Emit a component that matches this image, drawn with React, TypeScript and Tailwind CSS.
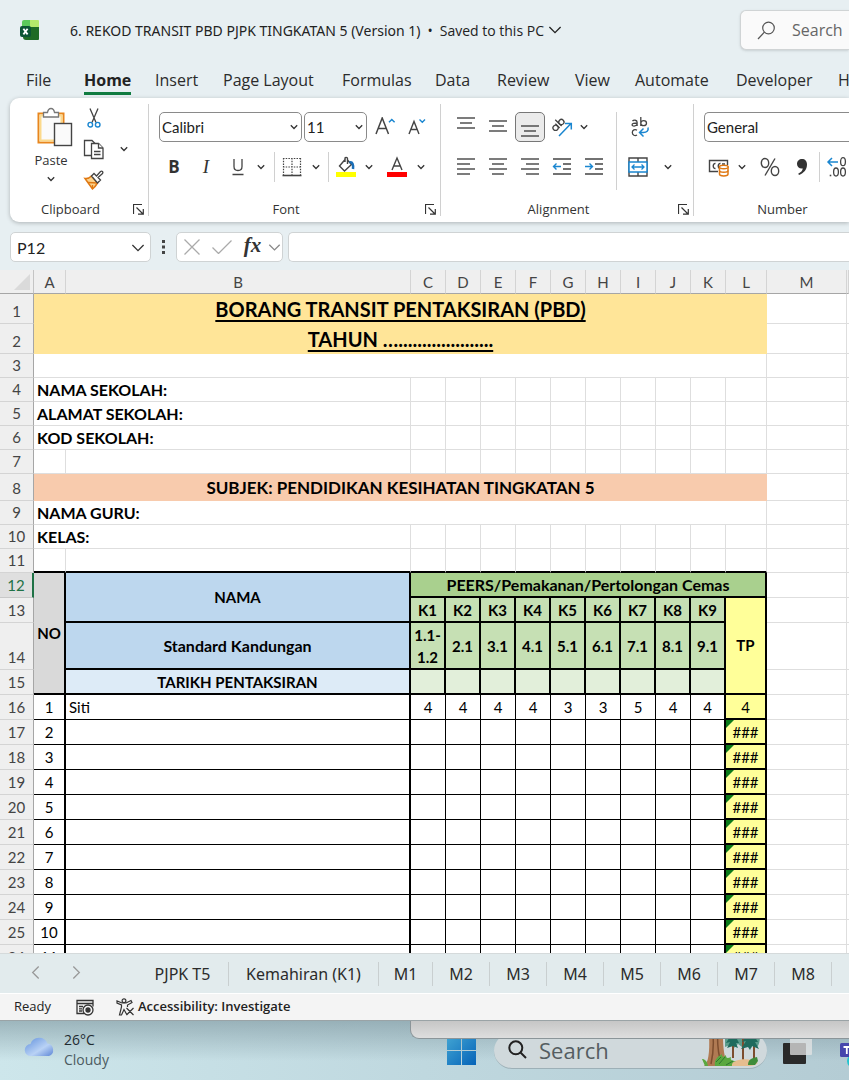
import React from "react";

const CELL_FONT = "font-['Lato','Liberation_Sans',sans-serif]";

function Chevron({ size = 8, className = "" }: { size?: number; className?: string }) {
  return (
    <svg width={size} height={size} viewBox="0 0 8 8" fill="none" stroke="currentColor" strokeWidth="1.3" className={className} aria-hidden="true">
      <path d="M0.8 2.3 4 5.5 7.2 2.3" vectorEffect="non-scaling-stroke" />
    </svg>
  );
}

type IconButtonProps = { label: string; className?: string; children: React.ReactNode };

function IconButton({ label, className = "w-8", children }: IconButtonProps) {
  return (
    <button type="button" aria-label={label} className={`flex h-[30px] shrink-0 items-center justify-center text-[#333] ${className}`}>
      {children}
    </button>
  );
}

function Group({ title, launcher = true, className, children }: { title: string; launcher?: boolean; className: string; children: React.ReactNode }) {
  return (
    <section className={`flex flex-col ${className}`} aria-label={title}>
      <div className="h-[96px]">{children}</div>
      <div className="flex h-7 items-center pt-[2px]">
        <span className={launcher ? "flex-1 pr-[2px] text-center text-[13px] leading-4 text-[#333]" : "flex-1 pl-[22px] text-center text-[13px] leading-4 text-[#333]"}>{title}</span>
        {launcher && (
          <button type="button" aria-label={`${title} settings`} className="mr-1 text-[#333]">
            <svg width="11" height="11" viewBox="0 0 11 11" fill="none" stroke="currentColor">
              <path d="M0.5 10V0.5H9M3.5 3.5 9.5 9.5M5 10.2h5.3V5" strokeWidth="1.2" />
            </svg>
          </button>
        )}
      </div>
    </section>
  );
}

function AlignLines({ rows }: { rows: [number, number, number][] }) {
  return (
    <svg width="20" height="20" viewBox="0 0 20 20" stroke="#444" strokeWidth="1.4" aria-hidden="true">
      {rows.map(([y, a, b]) => (
        <path key={y} d={`M${a} ${y}H${b}`} />
      ))}
    </svg>
  );
}

const TABS: [string, string][] = [
  ["File", "w-[58px]"],
  ["Home", "w-[71px]"],
  ["Insert", "w-[68px]"],
  ["Page Layout", "w-[119px]"],
  ["Formulas", "w-[93px]"],
  ["Data", "w-[62px]"],
  ["Review", "w-[78px]"],
  ["View", "w-[60px]"],
  ["Automate", "w-[101px]"],
  ["Developer", "w-[102px]"],
  ["Help", "w-[60px]"],
];

function TitleBar() {
  return (
    <header className="flex h-[60px] shrink-0 items-center">
      <div className="flex w-[740px] shrink-0 items-center pl-5">
        <svg width="20" height="20" viewBox="0 0 20 20" aria-label="Excel">
          <path d="M4 0h8v8H2V2a2 2 0 0 1 2-2z" fill="#5cc95c" />
          <path d="M10 0h8a1 1 0 0 1 1 1v6h-9z" fill="#b5e96b" />
          <path d="M3 7h16v12a1 1 0 0 1-1 1H6a3 3 0 0 1-3-3z" fill="#1e6b25" />
          <rect x="0" y="6" width="11" height="11" rx="2" fill="#0c5535" />
          <path d="M3.4 8.8 7.6 14.4M7.6 8.8 3.4 14.4" stroke="#fff" strokeWidth="1.8" />
        </svg>
        <span className="ml-[30px] whitespace-nowrap font-['Noto_Sans',sans-serif] text-[14px] text-[#222]">
          6. REKOD TRANSIT PBD PJPK TINGKATAN 5 (Version 1)
        </span>
        <span className="mx-[7px] text-[14px] text-[#222]">•</span>
        <button type="button" className="flex items-center gap-1 whitespace-nowrap text-[14px] text-[#222]">
          Saved to this PC
          <Chevron size={14} />
        </button>
      </div>
      <label className="flex h-10 min-w-0 flex-1 items-center overflow-hidden rounded-l-md border border-r-0 border-[#d0d4d5] bg-[#fafafa] pl-4 shadow-sm">
        <svg width="19" height="19" viewBox="0 0 19 19" fill="none" stroke="#555" strokeWidth="1.2" className="shrink-0" aria-hidden="true">
          <circle cx="11.5" cy="7" r="5.8" />
          <path d="M7.4 11.2 1 18" />
        </svg>
        <input type="search" aria-label="Search" placeholder="Search" className="ml-4 w-[200px] shrink-0 bg-transparent text-[16px] text-[#555] outline-none placeholder:text-[#666]" />
      </label>
    </header>
  );
}

function Ribbon() {
  return (
    <div className="ml-[10px] flex h-[124px] shrink-0 rounded-l-[9px] bg-white shadow-[0_1px_4px_rgba(0,0,0,0.25)]">
      <Group title="Clipboard" className="w-[138px] shrink-0">
        <div className="flex h-full pl-[22px] pt-[5px]">
          <button type="button" className="flex w-[38px] flex-col items-center pt-1 text-[13px] leading-4 text-[#333]">
            <svg width="38" height="40" viewBox="0 0 38 40" fill="none" className="ml-[6px] shrink-0" aria-hidden="true">
              <rect x="3.5" y="6.500" width="25" height="29" fill="#fff" stroke="#e8861e" strokeWidth="2" />
              <rect x="5.500" y="8.500" width="21" height="25" stroke="#fbd98b" strokeWidth="2" fill="#fafafa" />
              <path d="M8.500 10V5.500h4C13 2.500 14.500 1.500 16 1.500s3 1 3.500 4h4V10z" fill="#fff" stroke="#777" strokeWidth="1.300" />
              <rect x="19.500" y="16.500" width="17" height="22" fill="#fafafa" stroke="#444" strokeWidth="1.400" />
            </svg>
            <span className="mt-[5px]">Paste</span>
            <Chevron className="mt-[7px]" />
          </button>
          <div className="flex flex-col gap-px">
            <IconButton label="Cut" className="ml-2 w-8">
              <svg width="14" height="22" viewBox="0 0 14 22" fill="none" aria-hidden="true">
                <path d="M3 1.500 9 15.500M11 1.500 5 15.500" stroke="#444" strokeWidth="1.300" />
                <circle cx="3.300" cy="17.700" r="2.300" stroke="#1a86d0" strokeWidth="1.400" />
                <circle cx="10.700" cy="17.700" r="2.300" stroke="#1a86d0" strokeWidth="1.400" />
              </svg>
            </IconButton>
            <div className="flex">
              <IconButton label="Copy" className="ml-2 w-8">
                <svg width="22" height="22" viewBox="0 0 22 22" fill="#fff" stroke="#444" strokeWidth="1.300" aria-hidden="true">
                  <path d="M8 17.500H1.500v-15h7.500l3 3" />
                  <path d="M8.500 5.500h7l4.500 4.500v10.500H8.500z" />
                  <path d="M15.500 5.500v4.500h4.500M11 13.500h6.500M11 16.500h6.500" />
                </svg>
              </IconButton>
              <IconButton label="Copy options" className="ml-1 w-5"><Chevron /></IconButton>
            </div>
            <IconButton label="Format Painter" className="ml-2 w-8">
              <svg width="22" height="20" viewBox="0 0 22 20" fill="none" aria-hidden="true">
                <path d="M2 8.500c3 .5 4.500-.5 6.500-2.500l6 7c-1.500 2.500-3 4.500-5 6z" fill="#fbd38d" stroke="#e07812" strokeWidth="1.500" />
                <path d="m5 12.500 9 .5M9.500 19v-4" stroke="#e07812" strokeWidth="1.300" />
                <path d="M8.500 6 11 3.500l2.500 2.500 4-4.500c1.500-1 3 .5 2 2l-4.500 4 2.500 2.500-3 3z" fill="#fff" stroke="#444" strokeWidth="1.300" />
              </svg>
            </IconButton>
          </div>
        </div>
      </Group>
      <div className="my-[6px] w-px shrink-0 bg-[#d0d0d0]" />

      <Group title="Font" className="w-[291px] shrink-0">
        <div className="flex pl-[10px] pt-[14px]">
          <div className="relative w-[143px]">
            <select aria-label="Font name" className={`h-[30px] w-full appearance-none rounded-[5px] border border-[#8a8a8a] bg-white pl-[2px] text-[15px] text-[#222] ${CELL_FONT}`}>
              <option>Calibri</option>
            </select>
            <Chevron className="pointer-events-none absolute right-1 top-[11px] text-[#333]" />
          </div>
          <div className="relative ml-[2px] w-[63px]">
            <select aria-label="Font size" className={`h-[30px] w-full appearance-none rounded-[5px] border border-[#8a8a8a] bg-white pl-[2px] text-[15px] text-[#222] ${CELL_FONT}`}>
              <option>11</option>
            </select>
            <Chevron className="pointer-events-none absolute right-1 top-[11px] text-[#333]" />
          </div>
          <IconButton label="Increase font size" className="ml-[2px] w-8">
            <svg width="22" height="20" viewBox="0 0 22 20" fill="none" stroke="#444" strokeWidth="1.500" aria-hidden="true">
              <path d="M2 17 8.200 1 14.500 17M4.300 11.500h7.900" />
              <path d="M15 5.200 17.800 2.500 20.600 5.200" stroke="#1a86d0" />
            </svg>
          </IconButton>
          <IconButton label="Decrease font size" className="w-8">
            <svg width="20" height="20" viewBox="0 0 20 20" fill="none" stroke="#444" strokeWidth="1.400" aria-hidden="true">
              <path d="M2 17 7 4.500 12 17M3.800 12.500h6.400" />
              <path d="M12.500 2.500 15.300 5.200 18 2.500" stroke="#1a86d0" />
            </svg>
          </IconButton>
        </div>
        <div className="flex items-center pl-[9px] pt-[10px]">
          <IconButton label="Bold"><span className="text-[17px] font-bold">B</span></IconButton>
          <IconButton label="Italic"><span className="font-['Liberation_Serif',serif] text-[19px] italic">I</span></IconButton>
          <IconButton label="Underline" className="w-[31px]">
            <svg width="14" height="18" viewBox="0 0 14 18" fill="none" stroke="#444" strokeWidth="1.300" aria-hidden="true">
              <path d="M3 1v7.500c0 2.500 1.500 4 4 4s4-1.500 4-4V1M1.500 16.500h11" />
            </svg>
          </IconButton>
          <IconButton label="Underline options" className="w-4"><Chevron /></IconButton>
          <div className="ml-[5px] h-[30px] w-px bg-[#d0d0d0]" />
          <IconButton label="Borders" className="w-[33px]">
            <svg width="20" height="20" viewBox="0 0 20 20" fill="none" stroke="#444" aria-hidden="true">
              <path d="M1 1.500h18M1.500 1v17M18.500 1v17M10 1v17M1 10h18" strokeDasharray="1.500 1.200" strokeWidth="1.200" />
              <path d="M0.500 18.500h19" strokeWidth="1.600" />
            </svg>
          </IconButton>
          <IconButton label="Border options" className="w-4"><Chevron /></IconButton>
          <div className="ml-[4px] h-[30px] w-px bg-[#d0d0d0]" />
          <IconButton label="Fill color" className="w-[34px]">
            <svg width="22" height="22" viewBox="0 0 22 22" fill="none" aria-hidden="true">
              <path d="M10.500 3 4.500 10l5 5 7-6.500-4-4.500M10 6V2.500c0-1.500 2.500-1.500 2.500 0V8" stroke="#444" strokeWidth="1.400" />
              <path d="M14.500 6.500c3-1 4 2 3.500 6.500" stroke="#1a6fb8" strokeWidth="2.500" />
              <rect x="1" y="16" width="20" height="5" fill="#ffff00" />
            </svg>
          </IconButton>
          <IconButton label="Fill color options" className="w-3"><Chevron /></IconButton>
          <IconButton label="Font color" className="ml-1 w-9">
            <svg width="20" height="22" viewBox="0 0 20 22" fill="none" aria-hidden="true">
              <path d="M5 14 10 2l5 12M6.700 10h6.600" stroke="#444" strokeWidth="1.400" />
              <rect x="0" y="16" width="20" height="5" fill="#ff0000" />
            </svg>
          </IconButton>
          <IconButton label="Font color options" className="w-3"><Chevron /></IconButton>
        </div>
      </Group>
      <div className="my-[6px] w-px shrink-0 bg-[#d0d0d0]" />

      <Group title="Alignment" className="w-[252px] shrink-0">
        <div className="flex pt-[14px]">
          <div className="w-[175px] shrink-0 pl-[9px]">
            <div className="flex">
              <IconButton label="Top align"><AlignLines rows={[[1, 1, 19], [6, 4, 16], [11, 1, 19]]} /></IconButton>
              <IconButton label="Middle align"><AlignLines rows={[[4, 1, 19], [9, 4, 16], [14, 1, 19]]} /></IconButton>
              <IconButton label="Bottom align" className="mx-px w-[30px] rounded-[5px] border border-[#777] bg-[#ebebeb]">
                <AlignLines rows={[[9, 1, 19], [14, 4, 16], [19, 1, 19]]} />
              </IconButton>
              <IconButton label="Orientation">
                <svg width="22" height="20" viewBox="0 0 22 20" fill="none" aria-hidden="true">
                  <g transform="rotate(-45 6 8)" stroke="#444" strokeWidth="1.300">
                    <circle cx="3" cy="9" r="2.600" />
                    <path d="M5.700 6v6M8.500 3v9" />
                    <circle cx="11.200" cy="9" r="2.600" />
                  </g>
                  <path d="M8 19 20 6.500M14 6.500h6.300v6" stroke="#1a86d0" strokeWidth="1.500" />
                </svg>
              </IconButton>
              <IconButton label="Orientation options" className="w-3"><Chevron /></IconButton>
            </div>
            <div className="flex pt-[10px]">
              <IconButton label="Align left"><AlignLines rows={[[2, 1, 19], [7, 1, 14], [12, 1, 19], [17, 1, 14]]} /></IconButton>
              <IconButton label="Center"><AlignLines rows={[[2, 1, 19], [7, 4, 16], [12, 1, 19], [17, 4, 16]]} /></IconButton>
              <IconButton label="Align right"><AlignLines rows={[[2, 1, 19], [7, 6, 19], [12, 1, 19], [17, 6, 19]]} /></IconButton>
              <IconButton label="Decrease indent">
                <svg width="20" height="20" viewBox="0 0 20 20" fill="none" aria-hidden="true">
                  <path d="M1 2h18M11 7h8M11 12h8M1 17h18" stroke="#444" strokeWidth="1.400" />
                  <path d="M9 9.500H1.500M4.500 6.500l-3 3 3 3" stroke="#1a86d0" strokeWidth="1.400" />
                </svg>
              </IconButton>
              <IconButton label="Increase indent">
                <svg width="20" height="20" viewBox="0 0 20 20" fill="none" aria-hidden="true">
                  <path d="M1 2h18M11 7h8M11 12h8M1 17h18" stroke="#444" strokeWidth="1.400" />
                  <path d="M1 9.500h7.500M5.500 6.500l3 3-3 3" stroke="#1a86d0" strokeWidth="1.400" />
                </svg>
              </IconButton>
            </div>
          </div>
          <div className="h-[78px] w-px bg-[#d0d0d0]" />
          <div className="pl-[6px]">
            <IconButton label="Wrap text" className="w-[34px]">
              <svg width="20" height="22" viewBox="0 0 20 22" fill="none" stroke="#444" strokeWidth="1.300" aria-hidden="true">
                <path d="M2.500 5.200c1-1.400 4.600-1.500 4.600 1V10M7.100 7c-3 0-5 .3-5 1.700 0 1.900 3.800 1.800 5-.4M10.800 1v9M10.800 7.200c0-3.500 5.700-3.500 5.700 0 0 3.300-5.700 3.300-5.700 0" />
                <path d="M7 14.200c-2-1.300-4.700-.2-4.700 2.400s2.700 3.700 4.700 2.400" />
                <path d="M18 11.500c.8 3.500-1.500 5-4.500 5h-3M13.500 12.500l-4 4 4 4" stroke="#1a86d0" strokeWidth="1.500" />
              </svg>
            </IconButton>
            <div className="flex pt-[10px]">
              <IconButton label="Merge and center" className="w-[30px]">
                <svg width="20" height="20" viewBox="0 0 20 20" fill="none" aria-hidden="true">
                  <path d="M1 1h18v18H1zM10 1v4M10 15v4" stroke="#444" strokeWidth="1.400" />
                  <rect x="1" y="5" width="18" height="10" fill="#fff" stroke="#1a86d0" strokeWidth="1.500" />
                  <path d="M4 10h12M6.500 7.500 4 10l2.500 2.500M13.500 7.500 16 10l-2.500 2.500" stroke="#1a86d0" strokeWidth="1.300" />
                </svg>
              </IconButton>
              <IconButton label="Merge options" className="ml-[5px] w-5"><Chevron /></IconButton>
            </div>
          </div>
        </div>
      </Group>
      <div className="my-[6px] w-px shrink-0 bg-[#d0d0d0]" />

      <Group title="Number" launcher={false} className="min-w-0 flex-1 overflow-hidden">
        <div className="pl-[10px] pt-[14px]">
          <select aria-label="Number format" className={`h-[30px] w-full appearance-none rounded-l-[5px] border border-r-0 border-[#8a8a8a] bg-white pl-[2px] text-[15px] text-[#222] ${CELL_FONT}`}>
            <option>General</option>
          </select>
          <div className="flex items-center pt-[10px]">
            <IconButton label="Accounting format" className="w-[30px]">
              <svg width="22" height="20" viewBox="0 0 22 20" fill="none" aria-hidden="true">
                <path d="M10 14.500H1.500v-11h18V8" stroke="#444" strokeWidth="1.400" />
                <path d="M7.500 6.500c-3-.5-3 5.500 0 5M12.500 6.500c-3-.5-3 5.500 0 5M14 7h3" stroke="#444" strokeWidth="1.400" />
                <path d="M11.500 10v7c0 2.500 8.500 2.500 8.500 0v-7z" fill="#fff" stroke="#e07812" strokeWidth="1.500" />
                <ellipse cx="15.800" cy="10" rx="4.300" ry="1.700" fill="#fff" stroke="#e07812" strokeWidth="1.400" />
                <path d="M11.500 13.500c0 2.400 8.500 2.400 8.500 0" stroke="#e07812" strokeWidth="1.400" />
              </svg>
            </IconButton>
            <IconButton label="Accounting options" className="w-4"><Chevron /></IconButton>
            <IconButton label="Percent style" className="w-10">
              <svg width="20" height="20" viewBox="0 0 20 20" fill="none" stroke="#444" strokeWidth="1.400" aria-hidden="true">
                <ellipse cx="5" cy="6" rx="3.700" ry="4.500" />
                <ellipse cx="15" cy="14" rx="3.700" ry="4.500" />
                <path d="M15 1.500 5 18.500" />
              </svg>
            </IconButton>
            <IconButton label="Comma style" className="w-6">
              <svg width="12" height="18" viewBox="0 0 12 18" fill="#333" aria-hidden="true">
                <path d="M6 1c3 0 5 2 5 5.500 0 5-3 8.500-8 10.500l-.8-1.300C5 14.300 6.500 12.800 6.800 10.500 3.500 11 1 9 1 6s2.200-5 5-5z" />
              </svg>
            </IconButton>
            <div className="ml-[5px] h-[30px] w-px shrink-0 bg-[#d0d0d0]" />
            <IconButton label="Increase decimal" className="ml-[6px] w-[22px]">
              <svg width="22" height="22" viewBox="0 0 22 22" fill="none" stroke="#444" strokeWidth="1.300" className="shrink-0" aria-hidden="true">
                <path d="M12 6H2M6 2 2 6l4 4" stroke="#1a86d0" strokeWidth="1.500" />
                <ellipse cx="17" cy="5.700" rx="2.400" ry="4" />
                <ellipse cx="10" cy="16" rx="2.400" ry="4" />
                <ellipse cx="17" cy="16" rx="2.400" ry="4" />
                <path d="M4.500 18.700v1.600" strokeWidth="1.600" />
              </svg>
            </IconButton>
          </div>
        </div>
      </Group>
    </div>
  );
}

function FormulaBar() {
  return (
    <div className="flex h-12 shrink-0 items-center pl-[10px] pt-[2px]">
      <div className="relative w-[141px] shrink-0">
        <input aria-label="Name box" defaultValue="P12" className={`h-[30px] w-full rounded-[5px] border border-[#cfd3d4] bg-white pl-[6px] text-[16px] text-[#222] outline-none ${CELL_FONT}`} />
        <Chevron size={14} className="pointer-events-none absolute right-[6px] top-[9px] text-[#333]" />
      </div>
      <svg width="25" height="14" viewBox="0 0 25 14" fill="#444" aria-hidden="true">
        <path d="M11 0h3v3h-3zM11 5.500h3v3h-3zM11 11h3v3h-3z" />
      </svg>
      <div className="flex h-[30px] w-[107px] shrink-0 items-center rounded-[5px] border border-[#cfd3d4] bg-white">
        <button type="button" aria-label="Cancel" className="flex w-[29px] justify-center">
          <svg width="16" height="16" viewBox="0 0 16 16" stroke="#aaa" strokeWidth="1.300"><path d="m0.500 0.500 15 15M15.500 0.500l-15 15" /></svg>
        </button>
        <button type="button" aria-label="Enter" className="flex w-[31px] justify-center">
          <svg width="20" height="14" viewBox="0 0 20 14" fill="none" stroke="#aaa" strokeWidth="1.300"><path d="m0.500 7.500 6 6L19.500 0.500" /></svg>
        </button>
        <button type="button" aria-label="Insert function" className="flex w-[31px] justify-center pb-1 font-['Liberation_Serif',serif] text-[21px] font-bold italic leading-6 text-[#333]">fx</button>
        <Chevron size={13} className="text-[#888]" />
      </div>
      <input aria-label="Formula" className="ml-[5px] h-[30px] min-w-0 flex-1 rounded-l-[5px] border border-r-0 border-[#cfd3d4] bg-white px-2 outline-none" />
    </div>
  );
}

const COLS = ["A", "B", "C", "D", "E", "F", "G", "H", "I", "J", "K", "L", "M", ""];
const GRID = "border-r border-b border-[#dedede]";
const THICK = "border-r-2 border-b-2 border-black";

function RowHead({ n, active = false }: { n: number; active?: boolean }) {
  return (
    <th
      scope="row"
      className={
        active
          ? "border-b border-r-2 border-b-[#c8c8c8] border-r-[#1f7246] bg-[#dfdfdf] p-0 pb-px text-center align-bottom text-[15px] font-normal leading-[22px] text-[#1f7246]"
          : "border-b border-r border-b-[#d4d4d4] border-r-[#a6a6a6] bg-[#efefef] p-0 pb-px text-center align-bottom text-[15px] font-normal leading-[22px] text-[#444]"
      }
    >
      {n}
    </th>
  );
}

function Side() {
  return (
    <>
      <td className={GRID} />
      <td className="border-b border-[#dedede]" />
    </>
  );
}

function Blanks({ count }: { count: number }) {
  return (
    <>
      {Array.from({ length: count }, (_, i) => (
        <td key={i} className={GRID} />
      ))}
    </>
  );
}

function LabelRow({ n, text }: { n: number; text: string }) {
  return (
    <tr className="h-[24px]">
      <RowHead n={n} />
      <td colSpan={2} className={`${GRID} py-0 pl-[3px] align-bottom text-[16px] font-bold leading-[22px]`}>{text}</td>
      <Blanks count={10} />
      <Side />
    </tr>
  );
}

const SCORES = [4, 4, 4, 4, 3, 3, 5, 4, 4];
const STANDARDS = ["1.1-1.2", "2.1", "3.1", "4.1", "5.1", "6.1", "7.1", "8.1", "9.1"];
const TITLE_CELL =
  "bg-[#ffe598] p-0 text-center text-[20px] font-bold leading-[29px] underline decoration-2 underline-offset-[3px] [text-decoration-skip-ink:none]";

function Sheet() {
  return (
    <main className={`min-h-0 flex-1 overflow-hidden bg-white text-[15px] text-black ${CELL_FONT}`}>
      <table className="w-full table-fixed border-separate border-spacing-0">
        <colgroup>
          <col className="w-[34px]" />
          <col className="w-[32px]" />
          <col className="w-[345px]" />
          {SCORES.map((_, i) => (
            <col key={i} className="w-[35px]" />
          ))}
          <col className="w-[41px]" />
          <col className="w-[80px]" />
          <col />
        </colgroup>
        <thead>
          <tr className="h-[24px]">
            <th className="border-b border-r border-b-[#a6a6a6] border-r-[#c4c4c4] bg-[#efefef] p-0 pr-[3px]">
              <svg width="16" height="16" viewBox="0 0 16 16" className="ml-auto" aria-hidden="true"><path d="M16 0v16H0z" fill="#dadada" /></svg>
            </th>
            {COLS.map((c, i) => (
              <th key={i} scope="col" className="border-b border-r border-b-[#a6a6a6] border-r-[#d4d4d4] bg-[#efefef] p-0 text-center font-normal leading-5 text-[#444]">{c}</th>
            ))}
          </tr>
        </thead>
        <tbody>
          <tr className="h-[30px]">
            <RowHead n={1} />
            <td colSpan={12} className={TITLE_CELL}>BORANG TRANSIT PENTAKSIRAN (PBD)</td>
            <Side />
          </tr>
          <tr className="h-[30px]">
            <RowHead n={2} />
            <td colSpan={12} className={TITLE_CELL}>TAHUN …....................</td>
            <Side />
          </tr>
          <tr className="h-[24px]">
            <RowHead n={3} />
            <td colSpan={12} className={GRID} />
            <Side />
          </tr>
          <LabelRow n={4} text="NAMA SEKOLAH:" />
          <LabelRow n={5} text="ALAMAT SEKOLAH:" />
          <LabelRow n={6} text="KOD SEKOLAH:" />
          <tr className="h-[24px]">
            <RowHead n={7} />
            <Blanks count={12} />
            <Side />
          </tr>
          <tr className="h-[27px]">
            <RowHead n={8} />
            <td colSpan={12} className="bg-[#f8cbad] p-0 text-center text-[17px] font-bold leading-[25px]">SUBJEK: PENDIDIKAN KESIHATAN TINGKATAN 5</td>
            <Side />
          </tr>
          <tr className="h-[24px]">
            <RowHead n={9} />
            <td colSpan={12} className={`${GRID} py-0 pl-[3px] align-bottom text-[16px] font-bold leading-[22px]`}>NAMA GURU:</td>
            <Side />
          </tr>
          <LabelRow n={10} text="KELAS:" />
          <tr className="h-[24px]">
            <RowHead n={11} />
            {COLS.slice(0, 12).map((c) => (
              <td key={c} className="border-b-2 border-r border-b-black border-r-[#dedede]" />
            ))}
            <Side />
          </tr>
          <tr className="h-[25px]">
            <RowHead n={12} active />
            <td rowSpan={4} className={`${THICK} bg-[#d9d9d9] p-0 text-center font-bold`}>NO</td>
            <td rowSpan={2} className={`${THICK} bg-[#bdd7ee] p-0 text-center font-bold`}>NAMA</td>
            <td colSpan={10} className={`${THICK} bg-[#a9d08e] p-0 text-center text-[16px] font-bold leading-[22px]`}>PEERS/Pemakanan/Pertolongan Cemas</td>
            <Side />
          </tr>
          <tr className="h-[25px]">
            <RowHead n={13} />
            {STANDARDS.map((s, i) => (
              <td key={s} className={`${THICK} bg-[#c6e0b4] p-0 text-center font-bold leading-[22px]`}>K{i + 1}</td>
            ))}
            <td rowSpan={3} className={`${THICK} bg-[#ffff99] p-0 text-center font-bold`}>TP</td>
            <Side />
          </tr>
          <tr className="h-[47px]">
            <RowHead n={14} />
            <td className={`${THICK} bg-[#bdd7ee] p-0 text-center text-[16px] font-bold`}>Standard Kandungan</td>
            {STANDARDS.map((s) => (
              <td key={s} className={`${THICK} bg-[#c6e0b4] p-0 text-center font-bold leading-[22px]`}>{s}</td>
            ))}
            <Side />
          </tr>
          <tr className="h-[25px]">
            <RowHead n={15} />
            <td className={`${THICK} bg-[#ddebf7] p-0 text-center font-bold leading-[22px]`}>TARIKH PENTAKSIRAN</td>
            {STANDARDS.map((s) => (
              <td key={s} className={`${THICK} bg-[#e2efda]`} />
            ))}
            <Side />
          </tr>
          {Array.from({ length: 11 }, (_, r) => (
            <tr key={r} className="h-[25px]">
              <RowHead n={16 + r} />
              <td className="border-b border-r-2 border-black p-0 text-center leading-[22px]">{r + 1}</td>
              <td className="border-b border-r-2 border-black p-0 pl-[3px] leading-[22px]">{r === 0 ? "Siti" : ""}</td>
              {SCORES.map((v, i) => (
                <td key={i} className={i === 8 ? "border-b border-r-2 border-black p-0 text-center leading-[22px]" : "border-b border-r border-black p-0 text-center leading-[22px]"}>
                  {r === 0 ? v : ""}
                </td>
              ))}
              <td className={`${THICK} relative bg-[#ffff99] p-0 text-center leading-[22px]`}>
                {r > 0 && (
                  <svg width="8" height="8" viewBox="0 0 8 8" className="absolute left-0 top-0" aria-hidden="true"><path d="M0 0h8L0 8z" fill="#0a7a1a" /></svg>
                )}
                {r === 0 ? 4 : "###"}
              </td>
              <Side />
            </tr>
          ))}
        </tbody>
      </table>
    </main>
  );
}

const SHEETS: [string, string][] = [
  ["PJPK T5", "w-[92px]"],
  ["Kemahiran (K1)", "w-[150px]"],
  ["M1", "w-[54px]"],
  ["M2", "w-[57px]"],
  ["M3", "w-[57px]"],
  ["M4", "w-[57px]"],
  ["M5", "w-[57px]"],
  ["M6", "w-[57px]"],
  ["M7", "w-[57px]"],
  ["M8", "w-[57px]"],
];

function SheetTabs() {
  return (
    <nav className="flex h-10 shrink-0 items-center overflow-hidden border-t border-[#d5dadb] bg-[#e2ebed] font-['Noto_Sans',sans-serif]" aria-label="Sheets">
      <div className="flex w-[137px] shrink-0 gap-[26px] pb-[3px] pl-[28px] text-[#999]">
        <button type="button" aria-label="Previous sheet"><Chevron size={15} className="rotate-90" /></button>
        <button type="button" aria-label="Next sheet"><Chevron size={15} className="-rotate-90" /></button>
      </div>
      {SHEETS.map(([name, width]) => (
        <button key={name} type="button" className={`h-6 shrink-0 whitespace-nowrap border-r border-[#c9cfd0] text-center text-[16px] leading-6 text-[#2b2b2b] ${width}`}>
          {name}
        </button>
      ))}
    </nav>
  );
}

function StatusBar() {
  return (
    <footer className="flex h-7 shrink-0 items-center border-b border-t border-b-[#9aa3a6] border-t-white bg-[#f4f4f4] pl-[14px] text-[13px] text-[#222]">
      <span className="w-[62px]">Ready</span>
      <svg width="18" height="17" viewBox="0 0 18 17" fill="none" stroke="#333" strokeWidth="1.300" aria-hidden="true">
        <path d="M8 14.500H1v-13h16v6M1 4.500h16M3 7.500h4M3 9.800h3M3 12h3" />
        <circle cx="12" cy="11" r="5" />
        <circle cx="12" cy="11" r="2" fill="#333" />
      </svg>
      <button type="button" className="ml-[22px] flex items-center gap-1 font-semibold">
        <svg width="18" height="18" viewBox="0 0 18 18" fill="none" stroke="#333" strokeWidth="1.200" aria-hidden="true">
          <circle cx="8" cy="2.700" r="1.900" />
          <path d="M11 17 8 11.500 5.500 17H3.500l2-8V7L1 5V3l5 2h4l5-2.500 1 2-4.500 2.500v2M10.500 10l7 7M17.500 10l-7 7" />
        </svg>
        Accessibility: Investigate
      </button>
    </footer>
  );
}

function Taskbar() {
  return (
    <div className="relative flex h-[59px] shrink-0 overflow-hidden bg-linear-to-r from-[#cde6eb] via-[#bfd8df] to-[#b4ccd4]">
      <div className="pointer-events-none absolute inset-x-0 top-0 h-10 bg-linear-to-b from-[#6d868f]/50 to-transparent" />
      <button type="button" className="relative flex w-[447px] shrink-0 items-start gap-2 pl-[24px] pt-[9px] text-left">
        <svg width="32" height="22" viewBox="0 0 32 22" className="mt-[6px]" aria-hidden="true">
          <defs>
            <linearGradient id="cloud" x1="0" y1="0" x2="1" y2="1">
              <stop offset="0" stopColor="#5f8fdc" />
              <stop offset="0.600" stopColor="#b9d2f5" />
              <stop offset="1" stopColor="#5d86d6" />
            </linearGradient>
          </defs>
          <path d="M7 20a6 6 0 0 1-.5-12A9 9 0 0 1 23.500 7.500 6.500 6.500 0 0 1 25 20z" fill="url(#cloud)" />
        </svg>
        <span className="text-[14px] leading-5 text-[#1f2b30]">
          26°C
          <span className="block text-[#4c5b61]">Cloudy</span>
        </span>
      </button>
      <button type="button" aria-label="Start" className="relative flex w-[47px] shrink-0 items-start pt-[15px]">
        <svg width="29" height="29" viewBox="0 0 29 29" aria-hidden="true">
          <defs>
            <linearGradient id="win" x1="0" y1="0" x2="1" y2="1">
              <stop offset="0" stopColor="#42a5d3" />
              <stop offset="1" stopColor="#0563b8" />
            </linearGradient>
          </defs>
          <path d="M0 0h14v14H0zM15 0h14v14H15zM0 15h14v14H0zM15 15h14v14H15z" fill="url(#win)" />
        </svg>
      </button>
      <label className="relative mt-3 flex h-9 w-[273px] shrink-0 items-center overflow-hidden rounded-full border-b border-[#9db0b7] bg-[#d0d9dc] pl-[14px]">
        <svg width="19" height="19" viewBox="0 0 19 19" fill="none" stroke="#222" strokeWidth="2" className="mb-[2px] shrink-0" aria-hidden="true">
          <circle cx="7.800" cy="7.800" r="6.500" />
          <path d="m12.500 12.500 5.500 5.500" />
        </svg>
        <input type="search" aria-label="Search Windows" placeholder="Search" className="ml-3 w-[163px] bg-transparent text-[22px] outline-none placeholder:text-[#555d61]" />
        <svg width="58" height="32" viewBox="0 0 58 32" className="shrink-0" aria-hidden="true">
          <path d="M23 0h35c0 6-1 10-3 12l-3-3-3 4-4-4-5 3-4-3-4 4-4-3-5 2z" fill="#5c9c8c" />
          <path d="M2 31c4-3 6-12 5-31h14c0 12 1 24 6 31z" fill="#b07a53" />
          <path d="M11 0c1 12 0 20-2 29M15.500 0c0 12 1 21 4 29" stroke="#7d4d2e" strokeWidth="1.500" fill="none" />
          <path d="M31 4v19M41 4v21M52 4v20" stroke="#7d4d2e" strokeWidth="2" />
          <path d="m29 0-5 8 4-1-3 6 6-2 5 2-2-5 3 0-4-8zM46-1l-6 8 4-1-5 8 7-2 2 3 2-4 7 3-4-7 3 0-5-8z" fill="#1f6b5d" />
          <path d="M27 31c4-8 22-9 29-3-3 2-5 3-8 3z" fill="#e6bd8f" />
          <path d="M13 31c-1-6 2-9 7-12 0 3 1 4 4 1 0 3 1 4 5 2-1 3 1 4 5 4-4 1-4 3-4 5zM0 24c3 0 5 2 6 7H3z" fill="#5aa83f" />
          <path d="m17 29 6-7M24 30l7-4M14 27l5-5" stroke="#2f7430" />
          <path d="M46 30c0-5 3-7 9-8l1 4-3 4z" fill="#3f8c3a" />
        </svg>
      </label>
      <button type="button" aria-label="Task view" className="relative ml-4 flex w-[57px] shrink-0 items-start pt-4">
        <svg width="30" height="28" viewBox="0 0 30 28" aria-hidden="true">
          <rect x="0" y="6" width="23" height="21" rx="1" fill="#2a2a2a" />
          <rect x="7" y="0" width="22" height="18" rx="1" fill="#e4e4e4" fillOpacity="0.750" />
        </svg>
      </button>
      <button type="button" aria-label="Teams" className="relative flex shrink-0 items-start pt-[22px]">
        <svg width="26" height="24" viewBox="0 0 26 24" aria-hidden="true">
          <circle cx="14" cy="18" r="7" fill="#22c5cf" />
          <rect width="17" height="14" rx="1.500" fill="#4646ad" />
          <path d="M3.500 4H10M6.800 4v7" stroke="#fff" strokeWidth="1.800" />
        </svg>
      </button>
      <div className="absolute left-[410px] right-0 top-0 h-[18px] rounded-bl-[9px] border-b border-l border-[#8b9599] bg-linear-to-b from-[#c6c6c6] to-[#dedede]" />
    </div>
  );
}

export default function App() {
  return (
    <div className="flex h-screen flex-col overflow-hidden bg-[#e7eff2] font-['Open_Sans','Noto_Sans',sans-serif]">
      <TitleBar />
      <nav className="flex h-[38px] shrink-0 items-start overflow-hidden pl-[26px] pt-[8px]" aria-label="Ribbon tabs">
        {TABS.map(([name, width]) => (
          <div key={name} className={`shrink-0 ${width}`}>
            <a
              href="#"
              className={
                name === "Home"
                  ? "inline-block whitespace-nowrap border-b-[3px] border-[#107c41] text-[16px] font-bold leading-[23px] text-[#222]"
                  : "inline-block whitespace-nowrap text-[16px] leading-[23px] text-[#2b2b2b]"
              }
            >
              {name}
            </a>
          </div>
        ))}
      </nav>
      <Ribbon />
      <FormulaBar />
      <Sheet />
      <SheetTabs />
      <StatusBar />
      <Taskbar />
    </div>
  );
}
